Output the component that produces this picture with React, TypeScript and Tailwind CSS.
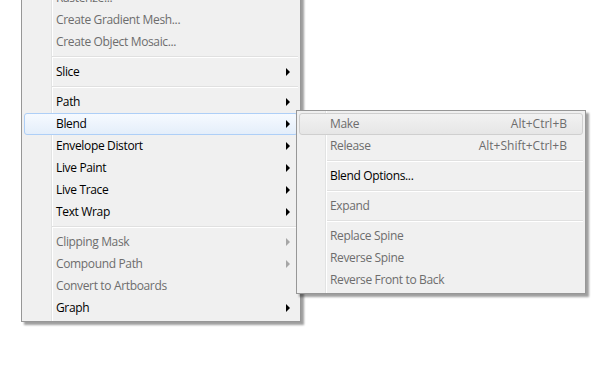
import React from 'react'

type Item =
  | { kind: 'sep' }
  | { kind: 'item'; label: string; disabled?: boolean; arrow?: boolean; active?: boolean; shortcut?: string }

const mainItems: Item[] = [
  { kind: 'item', label: 'Rasterize...', disabled: true },
  { kind: 'item', label: 'Create Gradient Mesh...', disabled: true },
  { kind: 'item', label: 'Create Object Mosaic...', disabled: true },
  { kind: 'sep' },
  { kind: 'item', label: 'Slice', arrow: true },
  { kind: 'sep' },
  { kind: 'item', label: 'Path', arrow: true },
  { kind: 'item', label: 'Blend', arrow: true, active: true },
  { kind: 'item', label: 'Envelope Distort', arrow: true },
  { kind: 'item', label: 'Live Paint', arrow: true },
  { kind: 'item', label: 'Live Trace', arrow: true },
  { kind: 'item', label: 'Text Wrap', arrow: true },
  { kind: 'sep' },
  { kind: 'item', label: 'Clipping Mask', arrow: true, disabled: true },
  { kind: 'item', label: 'Compound Path', arrow: true, disabled: true },
  { kind: 'item', label: 'Convert to Artboards', disabled: true },
  { kind: 'item', label: 'Graph', arrow: true },
]

const blendItems: Item[] = [
  { kind: 'item', label: 'Make', shortcut: 'Alt+Ctrl+B', disabled: true, active: true },
  { kind: 'item', label: 'Release', shortcut: 'Alt+Shift+Ctrl+B', disabled: true },
  { kind: 'sep' },
  { kind: 'item', label: 'Blend Options...' },
  { kind: 'sep' },
  { kind: 'item', label: 'Expand', disabled: true },
  { kind: 'sep' },
  { kind: 'item', label: 'Replace Spine', disabled: true },
  { kind: 'item', label: 'Reverse Spine', disabled: true },
  { kind: 'item', label: 'Reverse Front to Back', disabled: true },
]

function Arrow({ disabled }: { disabled?: boolean }) {
  return (
    <span
      className={
        disabled
          ? 'ml-auto h-0 w-0 border-y-[4px] border-l-[4px] border-y-transparent border-l-[#a6a6a6]'
          : 'ml-auto h-0 w-0 border-y-[4px] border-l-[4px] border-y-transparent border-l-black'
      }
    />
  )
}

function Menu({ items, sub }: { items: Item[]; sub?: boolean }) {
  return (
    <div className="relative border border-[#979797] bg-[#f0f0f0] p-[2px] shadow-[3px_3px_2px_rgba(0,0,0,0.38)]">
      {/* icon gutter */}
      <div className={sub ? 'absolute top-0 bottom-0 left-[28px] w-px bg-[#e2e3e3]' : 'absolute top-0 bottom-0 left-[29px] w-px bg-[#e2e3e3]'} />
      <div className={sub ? 'absolute top-0 bottom-0 left-[29px] w-px bg-white' : 'absolute top-0 bottom-0 left-[30px] w-px bg-white'} />
      {items.map((it, i) => {
        if (it.kind === 'sep') {
          return (
            <div key={i} className="relative flex h-[8px] flex-col justify-center pl-[28px]">
              <div className="h-px bg-[#e0e0e0]" />
              <div className="h-px bg-white" />
            </div>
          )
        }
        let rowCls = 'relative flex h-[22px] items-center border border-transparent'
        if (it.active && !it.disabled) {
          rowCls = 'relative flex h-[22px] items-center rounded-[3px] border border-[#aecff7] bg-gradient-to-b from-[#f6faff] to-[#e4eefa]'
        } else if (it.active) {
          rowCls = 'relative flex h-[22px] items-center rounded-[3px] border border-[#cfcfcf] bg-gradient-to-b from-[#f2f2f2] to-[#e6e6e6]'
        }
        return (
          <div key={i} className={rowCls}>
            <div className={sub ? 'flex w-full items-center pr-[15px] pl-[30px]' : 'flex w-full items-center pr-[7px] pl-[31px]'}>
              <span className={it.disabled ? 'text-[#6d6d6d]' : 'text-black'}>{it.label}</span>
              {it.shortcut && <span className="ml-auto tracking-normal text-[#6d6d6d]">{it.shortcut}</span>}
              {it.arrow && <Arrow disabled={it.disabled} />}
            </div>
          </div>
        )
      })}
    </div>
  )
}

export default function App() {
  return (
    <div className="relative h-[373px] w-[600px] overflow-hidden bg-white font-['Segoe_UI','Open_Sans',sans-serif] text-[12px] leading-none tracking-[-0.35px]">
      <div className="-mt-[16px] ml-[21px] w-[280px]">
        <Menu items={mainItems} />
      </div>
      <div className="absolute top-[110px] left-[296px] w-[290px]">
        <Menu items={blendItems} sub />
      </div>
    </div>
  )
}
